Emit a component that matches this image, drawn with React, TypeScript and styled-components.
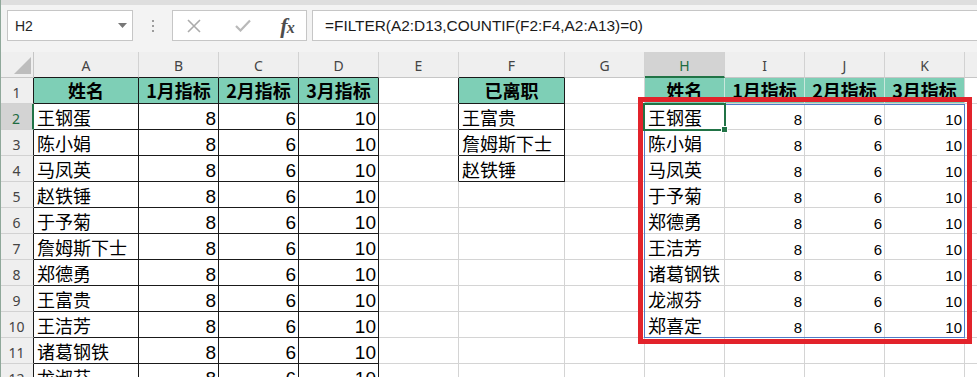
import React from 'react';
import styled, { createGlobalStyle } from 'styled-components';

const CJK = `"Noto Sans CJK SC", "Noto Sans", sans-serif`;
const UI = `"Liberation Sans", Arial, sans-serif`;
const HEAD = `"Noto Sans", "Liberation Sans", sans-serif`;

const GlobalStyle = createGlobalStyle`
  html, body { margin: 0; padding: 0; background: #fff; }
  body { width: 977px; height: 377px; overflow: hidden; }
  * { box-sizing: border-box; }
`;

const Window = styled.div`
  position: relative;
  width: 977px;
  height: 377px;
  overflow: hidden;
  display: flex;
  flex-direction: column;
  background: #fff;
  &::after {
    content: '';
    position: absolute;
    left: 0;
    top: 0;
    bottom: 0;
    width: 1px;
    background: #8fa89a;
  }
`;

const FormulaBar = styled.div`
  flex: 0 0 52px;
  height: 52px;
  background: #f3f3f3;
  border-top: 5px solid #dedede;
  display: flex;
  align-items: flex-start;
  padding: 5px 0 0 7px;
`;

const NameBox = styled.div`
  width: 126px;
  height: 31px;
  background: #fff;
  border: 1px solid #c6c6c6;
  display: flex;
  align-items: center;
  justify-content: space-between;
  padding: 0 5px 0 7px;
  font-family: ${UI};
  font-size: 14px;
  color: #262626;
`;

const Dots = styled.div`
  width: 39px;
  height: 31px;
  display: flex;
  flex-direction: column;
  align-items: center;
  justify-content: center;
  gap: 3px;
  & > span {
    width: 2px;
    height: 2px;
    background: #9c9c9c;
  }
`;

const ButtonsBox = styled.div`
  width: 135px;
  height: 31px;
  background: #fff;
  border: 1px solid #c6c6c6;
  display: grid;
  grid-template-columns: 41px 58px 30px;
  align-items: center;
  justify-items: center;
`;

const Fx = styled.span`
  font-family: "Liberation Serif", "Times New Roman", serif;
  font-style: italic;
  font-weight: 700;
  font-size: 22px;
  line-height: 1;
  color: #4d4d4d;
  letter-spacing: -1px;
  & > small {
    font-size: 16px;
  }
`;

const FormulaInput = styled.div`
  flex: 1;
  height: 31px;
  margin-left: 5px;
  margin-right: -3px;
  background: #fff;
  border: 1px solid #c6c6c6;
  display: flex;
  align-items: center;
  padding-left: 12px;
  font-family: ${UI};
  font-size: 15.4px;
  color: #1a1a1a;
  white-space: nowrap;
`;

const Sheet = styled.div`
  position: relative;
  display: grid;
  grid-template-columns: 34px 105px 80px 80px 80px 80px 106px 80px 80px 80px 80px 80px 80px;
  grid-auto-rows: 26px;
`;

const Corner = styled.div`
  background: #efefef;
  border-right: 1px solid #c6c6c6;
  border-bottom: 1px solid #c6c6c6;
  display: flex;
  align-items: flex-end;
  justify-content: flex-end;
  padding: 0 2px 3px 0;
`;

const ColHeader = styled.div<{ $sel?: boolean; $bb: string }>`
  background: ${p => (p.$sel ? '#d3d3d3' : '#efefef')};
  border-right: 1px solid #d2d2d2;
  border-bottom: ${p => (p.$sel ? `2px solid #217346` : `1px solid ${p.$bb}`)};
  display: flex;
  align-items: center;
  justify-content: center;
  padding-top: ${p => (p.$sel ? '2px' : '1px')};
  font-family: ${HEAD};
  font-size: 14px;
  color: ${p => (p.$sel ? '#1e6b41' : '#444')};
`;

const RowHeader = styled.div<{ $sel?: boolean; $rb: string }>`
  background: ${p => (p.$sel ? '#d3d3d3' : '#efefef')};
  border-right: ${p => (p.$sel ? `2px solid #217346` : `1px solid ${p.$rb}`)};
  border-bottom: 1px solid #d2d2d2;
  display: flex;
  align-items: center;
  justify-content: center;
  padding-top: 3px;
  font-family: ${HEAD};
  font-size: 14px;
  color: ${p => (p.$sel ? '#1e6b41' : '#444')};
`;

type Kind = 'empty' | 'name' | 'num' | 'numS' | 'head';

const Cell = styled.div<{ $rb: string; $bb: string; $fill?: boolean; $kind: Kind }>`
  border-right: 1px solid ${p => p.$rb};
  border-bottom: 1px solid ${p => p.$bb};
  background: ${p => (p.$fill ? '#7ecfb6' : '#fff')};
  overflow: hidden;
  white-space: nowrap;
  display: flex;
  align-items: flex-start;
  justify-content: ${p =>
    p.$kind === 'num' || p.$kind === 'numS' ? 'flex-end' : p.$kind === 'head' ? 'center' : 'flex-start'};
  line-height: 24px;
  color: #000;
  padding: ${p =>
    p.$kind === 'num'
      ? '3px 2px 0 0'
      : p.$kind === 'numS'
      ? '4px 2px 0 0'
      : p.$kind === 'head'
      ? '0 0 0 0'
      : '1px 0 0 3px'};
  font-family: ${p => (p.$kind === 'num' || p.$kind === 'numS' ? UI : CJK)};
  font-size: ${p => (p.$kind === 'num' ? '19px' : p.$kind === 'numS' ? '15px' : '18px')};
  font-weight: ${p => (p.$kind === 'head' ? 700 : 400)};
`;

const SpillBorder = styled.div`
  position: absolute;
  left: 644px;
  top: 52px;
  width: 321px;
  height: 234px;
  border: 1px solid #4f7bc7;
  pointer-events: none;
`;

const Selection = styled.div`
  position: absolute;
  left: 643px;
  top: 51px;
  width: 83px;
  height: 28px;
  border: 2px solid #217346;
  pointer-events: none;
`;

const Handle = styled.div`
  position: absolute;
  left: 721px;
  top: 74px;
  width: 7px;
  height: 7px;
  background: #217346;
  border: 1px solid #fff;
`;

const RedFrame = styled.div`
  position: absolute;
  left: 638px;
  top: 45px;
  width: 334px;
  height: 247px;
  border: 5px solid #e2232b;
  pointer-events: none;
`;

const COLS = ['A', 'B', 'C', 'D', 'E', 'F', 'G', 'H', 'I', 'J', 'K', 'L'];
const ROWS = 12;

const mainNames = ['王钢蛋', '陈小娟', '马凤英', '赵铁锤', '于予菊', '詹姆斯下士', '郑德勇', '王富贵', '王洁芳', '诸葛钢铁', '龙淑芬', '郑喜定'];
const leftNames = ['王富贵', '詹姆斯下士', '赵铁锤'];
const spillNames = ['王钢蛋', '陈小娟', '马凤英', '于予菊', '郑德勇', '王洁芳', '诸葛钢铁', '龙淑芬', '郑喜定'];
const heads = ['姓名', '1月指标', '2月指标', '3月指标'];
const nums = ['8', '6', '10'];

type CellData = { text: string; kind: Kind; fill?: boolean };

function getCell(r: number, c: number): CellData {
  if (c >= 1 && c <= 4) {
    if (r === 1) return { text: heads[c - 1], kind: 'head', fill: true };
    if (r >= 2 && r <= 13) {
      if (c === 1) return { text: mainNames[r - 2], kind: 'name' };
      return { text: nums[c - 2], kind: 'num' };
    }
  }
  if (c === 6) {
    if (r === 1) return { text: '已离职', kind: 'head', fill: true };
    if (r >= 2 && r <= 4) return { text: leftNames[r - 2], kind: 'name' };
  }
  if (c >= 8 && c <= 11) {
    if (r === 1) return { text: heads[c - 8], kind: 'head', fill: true };
    if (r >= 2 && r <= 10) {
      if (c === 8) return { text: spillNames[r - 2], kind: 'name' };
      return { text: nums[c - 9], kind: 'numS' };
    }
  }
  return { text: '', kind: 'empty' };
}

function bordered(r: number, c: number) {
  return (r >= 1 && r <= 13 && c >= 1 && c <= 4) || (r >= 1 && r <= 4 && c === 6);
}

const GRID = '#d4d4d4';
const BLACK = '#1a1a1a';

function rightBorder(r: number, c: number) {
  if (bordered(r, c) || bordered(r, c + 1)) return BLACK;
  if (r === 1 && c >= 8 && c <= 10) return '#c9e7dc';
  return GRID;
}

function bottomBorder(r: number, c: number) {
  if (bordered(r, c) || bordered(r + 1, c)) return BLACK;
  return GRID;
}

const CornerTriangle = () => (
  <svg width="17" height="17" viewBox="0 0 17 17">
    <polygon points="17,0 17,17 0,17" fill="#bdbdbd" />
  </svg>
);

export default function App() {
  const cells: React.ReactNode[] = [];
  cells.push(
    <Corner key="corner">
      <CornerTriangle />
    </Corner>
  );
  COLS.forEach((col, i) => {
    const c = i + 1;
    cells.push(
      <ColHeader key={`h${col}`} $sel={col === 'H'} $bb={bordered(1, c) ? BLACK : '#c6c6c6'}>
        {col === 'L' ? '' : col}
      </ColHeader>
    );
  });
  for (let r = 1; r <= ROWS; r++) {
    cells.push(
      <RowHeader key={`r${r}`} $sel={r === 2} $rb={bordered(r, 1) ? BLACK : '#c6c6c6'}>
        {r}
      </RowHeader>
    );
    for (let c = 1; c <= COLS.length; c++) {
      const d = getCell(r, c);
      cells.push(
        <Cell key={`${r}-${c}`} $kind={d.kind} $fill={d.fill} $rb={rightBorder(r, c)} $bb={bottomBorder(r, c)}>
          {d.text}
        </Cell>
      );
    }
  }

  return (
    <>
      <GlobalStyle />
      <Window>
        <FormulaBar>
          <NameBox>
            <span>H2</span>
            <svg width="9" height="5" viewBox="0 0 9 5">
              <polygon points="0,0 9,0 4.5,5" fill="#777" />
            </svg>
          </NameBox>
          <Dots>
            <span />
            <span />
            <span />
          </Dots>
          <ButtonsBox>
            <svg width="14" height="14" viewBox="0 0 14 14">
              <path d="M1 1 L13 13 M13 1 L1 13" stroke="#ababab" strokeWidth="1.6" fill="none" />
            </svg>
            <svg width="16" height="13" viewBox="0 0 16 13">
              <path d="M1 7 L5.5 11.5 L15 1.5" stroke="#b9b9b9" strokeWidth="2.2" fill="none" />
            </svg>
            <Fx>
              f<small>x</small>
            </Fx>
          </ButtonsBox>
          <FormulaInput>=FILTER(A2:D13,COUNTIF(F2:F4,A2:A13)=0)</FormulaInput>
        </FormulaBar>
        <Sheet>
          {cells}
          <SpillBorder />
          <Selection />
          <Handle />
          <RedFrame />
        </Sheet>
      </Window>
    </>
  );
}
